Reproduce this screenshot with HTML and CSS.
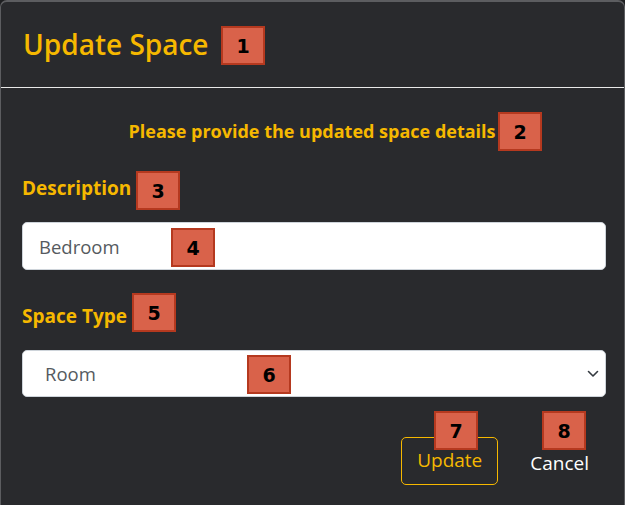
FILE: index.html
```html
<!DOCTYPE html>
<html>
<head>
<meta charset="utf-8">
<link rel="stylesheet" href="styles.css">
</head>
<body>
<div class="modal">
  <div class="header">
    <h1 class="title">Update Space</h1>
  </div>
  <div class="body">
    <p class="intro">Please provide the updated space details</p>
    <label class="label">Description</label>
    <div class="field">Bedroom</div>
    <label class="label label-type">Space Type</label>
    <div class="field select">
      <span class="select-text">Room</span>
      <svg class="chev" width="12" height="8" viewBox="0 0 12 8"><path d="M1.5 1.5 L6 6 L10.5 1.5" fill="none" stroke="#343a40" stroke-width="1.6" stroke-linecap="round" stroke-linejoin="round"/></svg>
    </div>
    <div class="actions">
      <button class="btn btn-update">Update</button>
      <button class="btn btn-cancel">Cancel</button>
    </div>
  </div>
  <span class="badge b1">1</span>
  <span class="badge b2">2</span>
  <span class="badge b3">3</span>
  <span class="badge b4">4</span>
  <span class="badge b5">5</span>
  <span class="badge b6">6</span>
  <span class="badge b7">7</span>
  <span class="badge b8">8</span>
</div>
</body>
</html>
```
FILE: styles.css
```css
html, body {
  margin: 0;
  padding: 0;
  background: #1e1f21;
  width: 625px;
  height: 505px;
  overflow: hidden;
}
body {
  font-family: "Open Sans", "Noto Sans", sans-serif;
}
.modal {
  position: relative;
  box-sizing: border-box;
  width: 625px;
  height: 520px;
  background: #292a2d;
  border: 1px solid #5c5d60;
  border-top-width: 2px;
  border-radius: 7px;
}
.header {
  height: 85px;
  border-bottom: 1px solid #e8e8e8;
  display: flex;
  align-items: center;
  padding-left: 22px;
}
.title {
  margin: 0;
  color: #f6b800;
  font-size: 28px;
  line-height: 36px;
  font-weight: 600;
  padding-bottom: 2px;
}
.body {
  padding: 0 18px 0 21px;
}
.intro {
  margin: 31px 0 0 0;
  text-align: center;
  color: #f6b800;
  font-weight: 700;
  font-size: 18px;
  line-height: 24px;
  padding-right: 4px;
}
.label {
  display: block;
  color: #f6b800;
  font-weight: 700;
  font-size: 19px;
  line-height: 24px;
  margin-top: 33px;
}
.label-type {
  margin-top: 34px;
}
.field {
  box-sizing: border-box;
  height: 48px;
  margin-top: 22px;
  background: #fff;
  border: 1px solid #ced4da;
  border-radius: 5px;
  padding-left: 16px;
  display: flex;
  align-items: center;
  color: #555a60;
  font-size: 18.5px;
}
.select {
  height: 47px;
  margin-top: 22px;
  padding-left: 22px;
  justify-content: space-between;
  padding-right: 6px;
}
.actions {
  display: flex;
  justify-content: flex-end;
  align-items: center;
  gap: 32px;
  margin-top: 40px;
  padding-right: 17px;
}
.btn {
  font-family: inherit;
  font-size: 19px;
  background: transparent;
  cursor: pointer;
}
.btn-update {
  box-sizing: border-box;
  width: 97px;
  height: 48px;
  padding: 0 0 2px 0;
  border: 1px solid #f6b800;
  border-radius: 5px;
  color: #f6b800;
}
.btn-cancel {
  border: none;
  color: #ffffff;
  padding: 4px 0 0 0;
}
.badge {
  position: absolute;
  box-sizing: border-box;
  width: 44px;
  height: 39px;
  background: #d9624a;
  border: 2px solid #b5391f;
  color: #000;
  font-family: "DejaVu Sans", sans-serif;
  font-weight: 700;
  font-size: 19px;
  display: flex;
  align-items: center;
  justify-content: center;
}
.b1 { left: 220px; top: 24px; }
.b2 { left: 497px; top: 110px; }
.b3 { left: 135px; top: 169px; }
.b4 { left: 170px; top: 226px; }
.b5 { left: 131px; top: 291px; }
.b6 { left: 246px; top: 353px; }
.b7 { left: 433px; top: 409px; }
.b8 { left: 541px; top: 409px; }
```
